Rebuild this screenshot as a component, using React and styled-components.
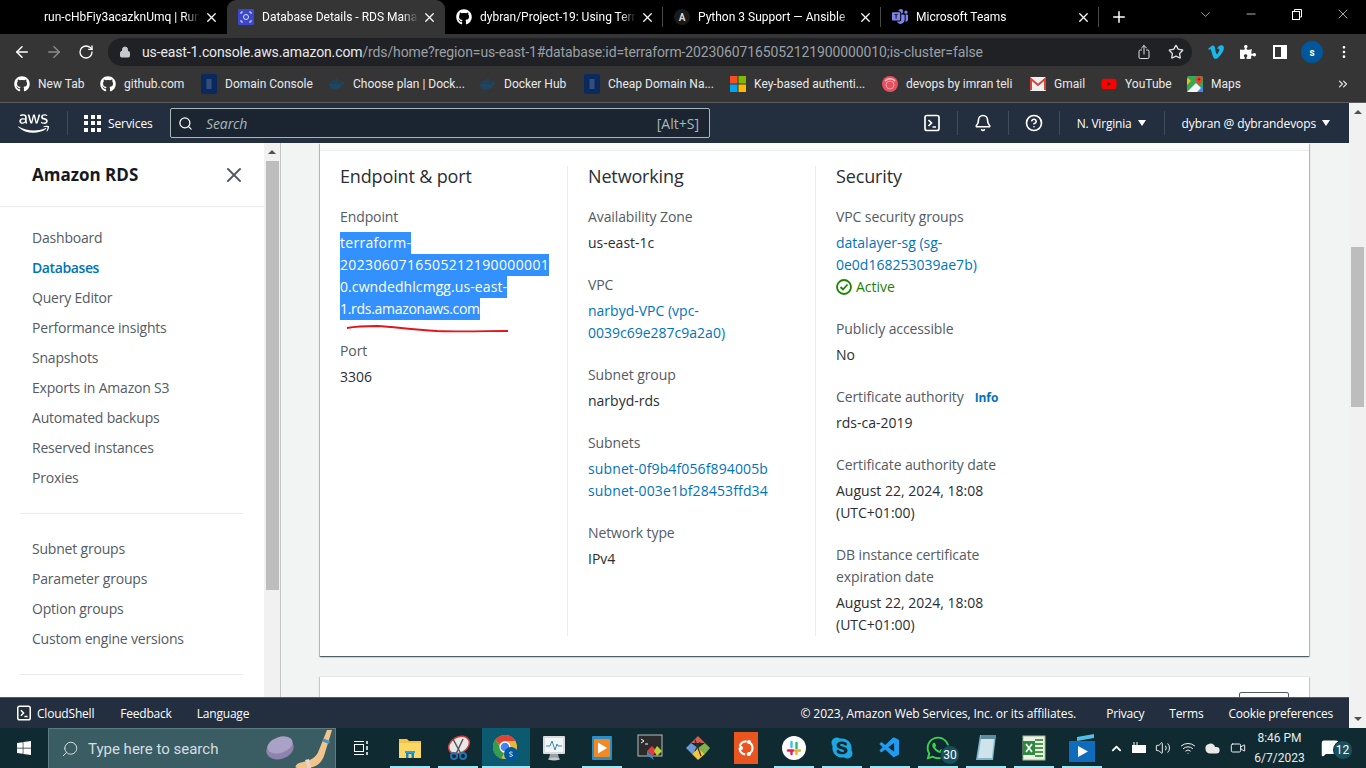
import React from 'react';
import styled, { createGlobalStyle } from 'styled-components';
import { FaGithub, FaDocker, FaVimeoV, FaPuzzlePiece, FaAws, FaSkype, FaWhatsapp, FaWindows, FaYoutube, FaChevronUp } from 'react-icons/fa';
import { BsMicrosoftTeams } from 'react-icons/bs';
import { VscVscode } from 'react-icons/vsc';
import { IoShareOutline } from 'react-icons/io5';
import {
  ArrowLeft, ArrowRight, RotateCw, Lock, Star, Plus, X, Minus, ChevronDown, Search, Bell, CircleHelp,
  MoreVertical, ChevronsRight, Volume2, Wifi, Cloud, Video, MessageSquare,
} from 'lucide-react';

const consoleFont = `"Open Sans", "Noto Sans", sans-serif`;
const chromeFont = `Roboto, "Noto Sans", sans-serif`;

const Global = createGlobalStyle`
  html, body { margin: 0; padding: 0; overflow: hidden; background: #fff; }
  * { box-sizing: border-box; }
`;

const Screen = styled.div`
  width: 1366px;
  height: 768px;
  display: flex;
  flex-direction: column;
  overflow: hidden;
  font-family: ${chromeFont};
`;

/* browser tabs */
const TabStrip = styled.div`
  height: 34px;
  background: #000;
  display: flex;
  padding-left: 9px;
  color: #fff;
  font-size: 12px;
`;
const Tab = styled.div`
  width: 218px;
  height: 34px;
  display: flex;
  align-items: center;
  gap: 8px;
  padding: 0 8px 0 11px;
  background: ${(p) => (p.$active ? '#353535' : 'transparent')};
  border-radius: 9px 9px 0 0;
  position: relative;
  &::after {
    content: '';
    display: ${(p) => (p.$sep ? 'block' : 'none')};
    position: absolute;
    right: 0;
    top: 7px;
    height: 20px;
    width: 1px;
    background: #4a4a4a;
  }
`;
const FavSlot = styled.span`
  width: 16px;
  height: 16px;
  flex: none;
  display: flex;
  align-items: center;
  justify-content: center;
`;
const TabTitle = styled.span`
  flex: 1;
  min-width: 0;
  white-space: nowrap;
  overflow: hidden;
  -webkit-mask-image: linear-gradient(90deg, #000 90%, transparent 100%);
  mask-image: linear-gradient(90deg, #000 90%, transparent 100%);
`;
const TabClose = styled(X)`
  flex: none;
  margin-left: -4px;
`;
const LetterFav = styled.span`
  width: 16px;
  height: 16px;
  border-radius: 50%;
  background: #1a1a1a;
  color: #d8d8d8;
  font-size: 10px;
  font-weight: 700;
  display: flex;
  align-items: center;
  justify-content: center;
`;
const NewTab = styled.div`
  width: 40px;
  display: flex;
  align-items: center;
  justify-content: center;
`;
const WindowBtns = styled.div`
  margin-left: auto;
  display: flex;
  align-items: flex-start;
  padding-top: 6px;
`;
const WinBtn = styled.span`
  width: 46px;
  height: 16px;
  display: flex;
  align-items: center;
  justify-content: center;
`;

/* address bar */
const Toolbar = styled.div`
  height: 36px;
  background: #353535;
  display: flex;
  align-items: flex-start;
  padding: 4px 0 0 6px;
  color: #fff;
`;
const NavBtn = styled.span`
  width: 32px;
  height: 28px;
  display: flex;
  align-items: center;
  justify-content: center;
  color: ${(p) => (p.$dim ? '#8a8a8a' : '#fff')};
`;
const AddressPill = styled.div`
  width: 1084px;
  height: 28px;
  margin: 0 8px 0 6px;
  border-radius: 14px;
  background: #202124;
  display: flex;
  align-items: center;
  padding: 0 0 0 11px;
  font-size: 14px;
`;
const Url = styled.span`
  margin-left: 11px;
  color: #9aa0a6;
  white-space: nowrap;
  flex: 1;
  letter-spacing: -0.12px;
  b { font-weight: 400; color: #e8eaed; }
`;
const PillIcon = styled.span`
  width: 32px;
  display: flex;
  justify-content: center;
  color: #dfe1e5;
`;
const Avatar = styled.span`
  width: 22px;
  height: 22px;
  border-radius: 50%;
  background: #00579c;
  color: #fff;
  font-size: 10px;
  font-weight: 700;
  display: flex;
  align-items: center;
  justify-content: center;
`;

/* bookmarks */
const Bookmarks = styled.div`
  height: 33px;
  background: #353535;
  border-bottom: 1px solid #5c5c5c;
  display: flex;
  align-items: center;
  padding: 0 0 4px 14px;
  gap: 16px;
  color: #e8eaed;
  font-size: 12px;
`;
const Mark = styled.div`
  display: flex;
  align-items: center;
  gap: 8px;
  white-space: nowrap;
`;
const MarkLabel = styled.span`
  width: ${(p) => p.$w}px;
`;
const MoreMarks = styled.span`
  margin-left: auto;
  margin-right: 16px;
  display: flex;
`;

/* page below browser chrome */
const Viewport = styled.div`
  flex: 1;
  min-height: 0;
  display: flex;
`;
const ConsoleCol = styled.div`
  flex: 1;
  min-width: 0;
  display: flex;
  flex-direction: column;
  font-family: ${consoleFont};
`;
const ScrollTrack = styled.div`
  width: ${(p) => p.$w}px;
  flex: none;
  background: #f1f1f1;
  display: flex;
  flex-direction: column;
  align-items: center;
`;
const ArrowUp = styled.span`
  flex: none;
  margin-top: ${(p) => p.$top}px;
  width: 0;
  height: 0;
  border-left: 4px solid transparent;
  border-right: 4px solid transparent;
  border-bottom: 4px solid #505050;
`;
const ArrowDown = styled.span`
  flex: none;
  margin-top: auto;
  margin-bottom: 7px;
  width: 0;
  height: 0;
  border-left: 4px solid transparent;
  border-right: 4px solid transparent;
  border-top: 4px solid #505050;
`;
const Thumb = styled.div`
  flex: none;
  width: 13px;
  margin-top: ${(p) => p.$top}px;
  height: ${(p) => p.$h}px;
  background: #bdbdbd;
`;

/* aws top nav */
const AwsHeader = styled.header`
  height: 40px;
  flex: none;
  background: #232f3e;
  color: #fff;
  display: flex;
  align-items: center;
  font-size: 12px;
  font-weight: 500;
  padding-left: 18px;
`;
const AwsLogo = styled(FaAws)`
  width: 31px;
  height: 31px;
  margin-right: 18px;
`;
const HeadSep = styled.span`
  width: 1px;
  height: 24px;
  background: #414d5c;
  flex: none;
`;
const ServicesBtn = styled.div`
  width: 69px;
  display: flex;
  align-items: center;
  gap: 7px;
  margin: 0 17px 0 16px;
  letter-spacing: -0.1px;
`;
const GridIcon = styled.div`
  width: 17px;
  height: 17px;
  flex: none;
  display: grid;
  grid-template-columns: repeat(3, 4px);
  grid-auto-rows: 4px;
  gap: 2.5px;
  i { background: #fff; display: block; }
`;
const SearchBox = styled.div`
  width: 540px;
  height: 30px;
  background: #1b2532;
  border: 1px solid #aab7b8;
  border-radius: 2px;
  display: flex;
  align-items: center;
  padding: 0 10px 0 7px;
  font-weight: 400;
  font-size: 14px;
  color: #aab7b8;
  em { margin-left: 13px; font-size: 14px; letter-spacing: -0.1px; }
  span { margin-left: auto; }
`;
const HeadRight = styled.div`
  margin-left: auto;
  display: flex;
  align-items: center;
  height: 24px;
  padding-right: 19px;
`;
const HeadIcon = styled.span`
  width: ${(p) => p.$w || 50}px;
  display: flex;
  justify-content: center;
`;
const HeadMenu = styled.span`
  display: flex;
  align-items: center;
  gap: 6px;
  padding: 0 ${(p) => p.$pad}px 0 17px;
  white-space: nowrap;
  letter-spacing: ${(p) => p.$ls}px;
`;
const Caret = styled.i`
  width: 0;
  height: 0;
  border-left: 4px solid transparent;
  border-right: 4px solid transparent;
  border-top: 6px solid #fff;
`;

/* body of console */
const Body = styled.div`
  flex: 1;
  min-height: 0;
  display: flex;
  overflow: hidden;
  background: #f2f3f3;
`;
const Sidebar = styled.aside`
  width: 264px;
  flex: none;
  background: #fff;
`;
const SideHead = styled.div`
  height: 64px;
  border-bottom: 1px solid #eaeded;
  padding: 0 18px 0 32px;
  display: flex;
  align-items: center;
  justify-content: space-between;
  color: #16191f;
  font-size: 17px;
  font-weight: 700;
  svg { color: #545b64; }
`;
const SideGroup = styled.nav`
  padding: 16px 0 20px;
  margin: 0 21px 0 20px;
  border-bottom: 1px solid #eaeded;
  & + & { padding-top: 20px; }
`;
const SideItem = styled.div`
  height: 30px;
  line-height: 30px;
  padding-left: 12px;
  font-size: 14px;
  color: ${(p) => (p.$on ? '#0073bb' : '#545b64')};
  font-weight: ${(p) => (p.$on ? 600 : 400)};
  letter-spacing: ${(p) => (p.$on ? -0.4 : -0.2)}px;
  white-space: nowrap;
`;
const Main = styled.main`
  flex: 1;
  min-width: 0;
  border-left: 1px solid #c4c4c4;
  padding: 0 40px 0 39px;
`;
const Card = styled.section`
  background: #fff;
  box-shadow: 0 1px 1px 0 rgba(0, 28, 36, 0.5), 1px 1px 1px 0 rgba(0, 28, 36, 0.2), -1px 1px 1px 0 rgba(0, 28, 36, 0.2);
`;
const CardStrip = styled.div`
  height: 8px;
  background: #fafafa;
  border-bottom: 1px solid #eaeded;
`;
const Columns = styled.div`
  display: grid;
  grid-template-columns: repeat(3, 248px);
  padding: 15px 0 20px 0;
`;
const Column = styled.div`
  padding: 0 20px;
  border-right: ${(p) => (p.$last ? 'none' : '1px solid #eaeded')};
  position: relative;
  height: 470px;
`;
const ColHead = styled.h3`
  margin: 0 0 20px;
  font-size: 18px;
  line-height: 20px;
  font-weight: 400;
  letter-spacing: -0.15px;
  color: #2a2e33;
`;
const Field = styled.div`
  margin-bottom: 20px;
  font-size: 14px;
  line-height: 22px;
`;
const Label = styled.div`
  color: #545b64;
  margin-bottom: 4px;
  letter-spacing: -0.1px;
`;
const InfoLink = styled.span`
  margin-left: 11px;
  color: #0073bb;
  font-size: 12px;
  line-height: 1;
  font-weight: 700;
  letter-spacing: -0.1px;
`;
const Value = styled.div`
  color: #2a2e33;
`;
const LinkValue = styled.div`
  color: #0073bb;
  letter-spacing: ${(p) => p.$ls || 0}px;
`;
const SelLine = styled.span`
  display: block;
  width: fit-content;
  height: 22px;
  background: #3390ff;
  color: #fff;
  white-space: nowrap;
  letter-spacing: ${(p) => p.$ls}px;
`;
const Status = styled.div`
  display: flex;
  align-items: center;
  gap: 4px;
  color: #1d8102;
`;
const RedMark = styled.svg`
  position: absolute;
  left: 26px;
  top: 158px;
  width: 164px;
  height: 10px;
`;
const NextCard = styled.section`
  margin-top: 21px;
  height: 40px;
  background: #fff;
  box-shadow: 0 1px 1px 0 rgba(0, 28, 36, 0.3), -1px 0 1px 0 rgba(0, 28, 36, 0.15), 1px 0 1px 0 rgba(0, 28, 36, 0.15);
  display: flex;
  justify-content: flex-end;
  padding: 15px 20px 0 0;
`;
const GhostBtn = styled.div`
  width: 50px;
  height: 24px;
  border: 1px solid #545b64;
  border-radius: 2px;
`;

/* aws footer */
const AwsFooter = styled.footer`
  height: 31px;
  flex: none;
  background: #232f3e;
  border-top: 1px solid #545b64;
  color: #fff;
  display: flex;
  align-items: center;
  font-size: 12px;
  font-weight: 500;
  letter-spacing: -0.2px;
  padding: 0 16px;
  white-space: nowrap;
`;
const FootLink = styled.span`
  margin-left: ${(p) => p.$ml}px;
`;
const FootCopy = styled.span`
  letter-spacing: -0.08px;
`;
const FootSpacer = styled.span`
  flex: 1;
`;

/* windows taskbar */
const Taskbar = styled.div`
  height: 40px;
  flex: none;
  background: #0f2a31;
  display: flex;
  align-items: center;
  color: #fff;
`;
const StartBtn = styled.div`
  width: 48px;
  display: flex;
  justify-content: center;
`;
const TaskSearch = styled.div`
  width: 288px;
  height: 40px;
  background: #3a5c63;
  border: 1px solid #5d7a80;
  border-bottom: none;
  display: flex;
  align-items: center;
  padding-left: 12px;
  font-size: 15px;
  font-family: ${chromeFont};
  color: #d5dfe1;
  span { margin-left: 9px; }
  svg:last-child { margin-left: auto; }
`;
const MirrorSearch = styled(Search)`
  transform: scaleX(-1);
`;
const TaskSlot = styled.div`
  width: ${(p) => p.$w || 48}px;
  height: 40px;
  flex: none;
  display: flex;
  align-items: center;
  justify-content: center;
  position: relative;
  background: ${(p) => (p.$active ? '#0b5a70' : 'transparent')};
  &::after {
    content: '';
    display: ${(p) => (p.$open ? 'block' : 'none')};
    position: absolute;
    left: ${(p) => (p.$active ? 0 : 4)}px;
    right: ${(p) => (p.$active ? 0 : 4)}px;
    bottom: 0;
    height: 2px;
    background: #9fe6f5;
  }
`;
const CountBadge = styled.span`
  position: absolute;
  right: ${(p) => p.$r}px;
  bottom: 3px;
  min-width: 20px;
  height: 20px;
  border-radius: 50%;
  background: #17505e;
  border: 1px solid #0f2a31;
  color: #fff;
  font-size: 12px;
  display: flex;
  align-items: center;
  justify-content: center;
  font-family: ${chromeFont};
`;
const Tray = styled.div`
  display: flex;
  align-items: center;
  gap: 8.5px;
  margin-left: 5px;
  color: #fff;
`;
const Clock = styled.div`
  width: 64px;
  margin-left: 2px;
  text-align: center;
  font-size: 12px;
  line-height: 20px;
  color: #e6ecec;
`;
const Notify = styled.div`
  position: relative;
  margin-left: 9px;
  width: 26px;
  height: 30px;
  display: flex;
  align-items: center;
`;

const nav1 = ['Dashboard', 'Databases', 'Query Editor', 'Performance insights', 'Snapshots', 'Exports in Amazon S3', 'Automated backups', 'Reserved instances', 'Proxies'];
const nav2 = ['Subnet groups', 'Parameter groups', 'Option groups', 'Custom engine versions'];

const RdsFavicon = () => (
  <svg width="16" height="16" viewBox="0 0 16 16">
    <rect width="16" height="16" rx="1" fill="#3b48cc" />
    <circle cx="8" cy="8" r="2.5" fill="none" stroke="#dfe3ff" strokeWidth="1" />
    <path d="M3 5V3h2M11 3h2v2M13 11v2h-2M5 13H3v-2" fill="none" stroke="#dfe3ff" strokeWidth="1" />
  </svg>
);
const DomainIcon = () => (
  <svg width="16" height="20" viewBox="0 0 16 20">
    <rect width="16" height="20" rx="2" fill="#0a2a5e" />
    <rect x="5.5" y="5" width="5" height="10" fill="#33507c" />
  </svg>
);
const MsLogo = () => (
  <svg width="16" height="16" viewBox="0 0 16 16">
    <rect width="7.5" height="7.5" fill="#f25022" />
    <rect x="8.5" width="7.5" height="7.5" fill="#7fba00" />
    <rect y="8.5" width="7.5" height="7.5" fill="#00a4ef" />
    <rect x="8.5" y="8.5" width="7.5" height="7.5" fill="#ffb900" />
  </svg>
);
const RedBall = () => (
  <svg width="16" height="16" viewBox="0 0 16 16">
    <circle cx="8" cy="8" r="8" fill="#e8505f" />
    <path d="M3 5c3-3 8-3 10 0" fill="none" stroke="#ffc2c8" strokeWidth="1.5" />
    <circle cx="8" cy="9" r="4" fill="none" stroke="#fff" strokeOpacity="0.45" />
  </svg>
);
const GmailIcon = () => (
  <svg width="16" height="14" viewBox="0 0 16 14">
    <rect width="16" height="14" rx="1" fill="#f1f1f1" />
    <path d="M1 13V2l7 6 7-6v11" fill="none" stroke="#d6453b" strokeWidth="2" />
  </svg>
);
const MapsIcon = () => (
  <svg width="16" height="16" viewBox="0 0 16 16">
    <rect width="16" height="16" rx="1.5" fill="#34a853" />
    <path d="M0 16 9 7l7 7v2z" fill="#f5f5f5" />
    <path d="M0 3v6l4-4-3-3z" fill="#fbbc04" />
    <path d="M10 16 16 10v6z" fill="#4285f4" />
    <path d="M12 0c-2 0-3.500 1.500-3.500 3.300C8.500 6 12 9 12 9s3.500-3 3.500-5.700C15.500 1.500 14 0 12 0z" fill="#ea4335" />
    <circle cx="12" cy="3.300" r="1.200" fill="#8f1d15" />
  </svg>
);
const SidePanelIcon = () => (
  <svg width="16" height="16" viewBox="0 0 16 16">
    <path fillRule="evenodd" d="M1 1h14v14H1zM3 3v10h6V3z" fill="#fff" />
  </svg>
);
const RestoreIcon = () => (
  <svg width="12" height="12" viewBox="0 0 12 12" fill="none" stroke="#fff">
    <rect x="1.5" y="3.5" width="7" height="8" />
    <path d="M3.5 3V1.5h7V9H9" />
  </svg>
);
const ShellIcon = ({ size = 18 }) => (
  <svg width={size} height={size} viewBox="0 0 18 18" fill="none" stroke="#fff" strokeWidth="1.7">
    <rect x="2" y="1.5" width="14" height="15" rx="2" />
    <path d="M5.5 6 8.5 9l-3 3M9.5 13h3.500" />
  </svg>
);
const Hockey = () => (
  <svg width="70" height="38" viewBox="0 0 70 38">
    <path d="M62 0 54 20c-2 6-6 9-12 11l-8 2c-3 1-5 5-2 5h8c10 0 16-4 19-12l8-26z" fill="#f2c48d" />
    <path d="M58.500 8.500 65 11l-1 3-6.500-2.500z" fill="#4a90c8" />
    <path d="M40 30l3 8h3l-2-9z" fill="#e5d7d0" />
    <ellipse cx="15" cy="19" rx="14" ry="10" transform="rotate(-18 15 19)" fill="#8d83ad" />
    <ellipse cx="15" cy="15" rx="13" ry="8" transform="rotate(-18 15 15)" fill="#a9a1c6" />
  </svg>
);
const Explorer = () => (
  <svg width="24" height="24" viewBox="0 0 24 24">
    <path d="M1 3h8l2 2h12v17H1z" fill="#f5c243" />
    <path d="M1 7h22v15H1z" fill="#fbd866" />
    <path d="M8 22v-7h8v7h-2.500v-4h-3v4z" fill="#1c7fc4" />
    <path d="M7 15h10v2H7z" fill="#29a0df" />
  </svg>
);
const Snip = () => (
  <svg width="26" height="26" viewBox="0 0 26 26">
    <ellipse cx="14" cy="10" rx="11" ry="8" transform="rotate(-30 14 10)" fill="#e8e8e8" stroke="#c8413f" strokeWidth="1.5" />
    <path d="M8 4l8 15M18 4 11 19" stroke="#555" strokeWidth="1.5" />
    <circle cx="9" cy="21" r="3" fill="none" stroke="#2472b4" strokeWidth="2" />
    <circle cx="18" cy="21" r="3" fill="none" stroke="#2472b4" strokeWidth="2" />
  </svg>
);
const ChromeIcon = () => (
  <svg width="26" height="26" viewBox="0 0 26 26">
    <circle cx="12" cy="12" r="12" fill="#e8b73a" />
    <path d="M12 0a12 12 0 0 1 10.400 6H12a6 6 0 0 0-5.700 4L2.500 4.500A12 12 0 0 1 12 0z" fill="#db4437" />
    <path d="M2.500 4.500 7 12a5 5 0 0 0 4 6l-2.500 5.500A12 12 0 0 1 2.500 4.500z" fill="#2f9e4f" />
    <circle cx="12" cy="12" r="5.500" fill="#fff" />
    <circle cx="12" cy="12" r="4.300" fill="#4285f4" />
    <circle cx="18" cy="19" r="7" fill="#00579c" />
    <path d="M16.500 21c2 .8 3.300 0 3-1-.3-1-3-.7-3-2 0-1 1.500-1.300 3-.7" fill="none" stroke="#fff" strokeWidth=".9" />
  </svg>
);
const ResMon = () => (
  <svg width="24" height="26" viewBox="0 0 24 26">
    <rect x="1" y="1" width="22" height="18" rx="1" fill="#d8dcde" />
    <rect x="3" y="3" width="18" height="14" fill="#f3f6f7" />
    <path d="M4 11h4l2-5 3 9 2-6 1 2h4" fill="none" stroke="#3d86b8" strokeWidth="1" />
    <path d="M8 19h8l1 4H7z" fill="#9aa0a3" />
    <ellipse cx="12" cy="24" rx="6" ry="1.500" fill="#c6c9cb" />
  </svg>
);
const Media = () => (
  <svg width="20" height="26" viewBox="0 0 20 26">
    <rect y="1" width="20" height="24" rx="1" fill="#2c8ec4" />
    <rect x="2" y="4" width="16" height="18" rx="1" fill="#f08a24" />
    <path d="M6 7.500 15 13l-9 5.500z" fill="#fff" />
  </svg>
);
const Cmder = () => (
  <svg width="26" height="28" viewBox="0 0 26 28">
    <rect x="1" y="1" width="24" height="21" fill="#2b2b2b" stroke="#bbb" />
    <path d="M4 5l3 2-3 2M8 10h3" fill="none" stroke="#fff" />
    <path d="M15 12l5 5-5 5-5-5z" fill="#e23b3b" />
    <path d="M20 12l5 5-5 5-3-5z" fill="#b7d332" />
    <path d="M10 17l5 5 2 4-7-5z" fill="#3a8ed0" />
  </svg>
);
const GitDiamond = () => (
  <svg width="26" height="26" viewBox="0 0 26 26">
    <path d="M13 1 20 8H6z" fill="#d85f4e" />
    <path d="M20 8l5 5-5 6-7-6z" fill="#7fb24a" />
    <path d="M13 13l7 6-7 6-6-6z" fill="#f0c542" />
    <path d="M6 8l7 5-6 6-6-6z" fill="#6a9bd6" />
    <path d="M10 5l6 16M15 7l-5 9" stroke="#333" strokeWidth="1.2" />
  </svg>
);
const UbuntuTile = () => (
  <svg width="24" height="32" viewBox="0 0 24 32">
    <rect width="24" height="32" fill="#e9541f" />
    <circle cx="12" cy="16" r="6.500" fill="none" stroke="#fff" strokeWidth="2.200" strokeDasharray="9 1.800" />
    <circle cx="7" cy="16" r="2" fill="#fff" />
    <circle cx="15" cy="10" r="2" fill="#fff" />
    <circle cx="15" cy="22" r="2" fill="#fff" />
  </svg>
);
const SlackTile = () => (
  <svg width="24" height="24" viewBox="0 0 24 24">
    <circle cx="12" cy="12" r="12" fill="#fff" />
    <path d="M9.500 6v5" stroke="#36c5f0" strokeWidth="2.400" strokeLinecap="round" />
    <path d="M14.500 7v5" stroke="#2eb67d" strokeWidth="2.400" strokeLinecap="round" />
    <path d="M6 14.500h5" stroke="#e01e5a" strokeWidth="2.400" strokeLinecap="round" />
    <path d="M13 14.500h5M14.500 18v-2" stroke="#ecb22e" strokeWidth="2.400" strokeLinecap="round" />
    <path d="M9.500 15v3" stroke="#e01e5a" strokeWidth="2.400" strokeLinecap="round" />
  </svg>
);
const Notepad = () => (
  <svg width="24" height="28" viewBox="0 0 24 28">
    <path d="M6 1h16l-3 25H2z" fill="#7fb6c9" />
    <path d="M7 5h13l-2 19H4z" fill="#cfe3ea" />
    <path d="M7 1h15l-.5 4H6.500z" fill="#5d8c9d" />
  </svg>
);
const ExcelTile = () => (
  <svg width="26" height="26" viewBox="0 0 26 26">
    <rect x="2" y="1" width="22" height="24" fill="#e9f2e4" stroke="#9db98f" />
    <path d="M14 5h8M14 9h8M14 13h8M14 17h8M14 21h8" stroke="#4d9a4d" strokeWidth="2" />
    <rect x="2" y="6" width="12" height="14" fill="#2f8a3f" />
    <path d="M5 9l6 8M11 9l-6 8" stroke="#fff" strokeWidth="1.600" />
  </svg>
);
const Stream = () => (
  <svg width="26" height="28" viewBox="0 0 26 28">
    <path d="M8 3 25 0v4L8 7z" fill="#4fc0ea" />
    <rect y="7" width="26" height="21" fill="#0f6cbd" />
    <path d="M9 12l10 5.500L9 23z" fill="#fff" />
  </svg>
);
const PlugIcon = () => (
  <svg width="16" height="14" viewBox="0 0 16 14" fill="none" stroke="#fff">
    <rect x="1.500" y="4.500" width="13" height="7" fill="#fff" />
    <path d="M3 1v3M6 1v3" />
  </svg>
);

export default function App() {
  return (
    <Screen>
      <Global />
      <TabStrip>
        <Tab>
          <FavSlot />
          <TabTitle>run-cHbFiy3acazknUmq | Run</TabTitle>
          <TabClose size={15} />
        </Tab>
        <Tab $active>
          <FavSlot><RdsFavicon /></FavSlot>
          <TabTitle>Database Details - RDS Mana</TabTitle>
          <TabClose size={15} />
        </Tab>
        <Tab $sep>
          <FavSlot><FaGithub size={16} /></FavSlot>
          <TabTitle>dybran/Project-19: Using Terr</TabTitle>
          <TabClose size={15} />
        </Tab>
        <Tab $sep>
          <FavSlot><LetterFav>A</LetterFav></FavSlot>
          <TabTitle>Python 3 Support — Ansible</TabTitle>
          <TabClose size={15} />
        </Tab>
        <Tab $sep>
          <FavSlot><BsMicrosoftTeams size={16} color="#7b83eb" /></FavSlot>
          <TabTitle>Microsoft Teams</TabTitle>
          <TabClose size={15} />
        </Tab>
        <NewTab><Plus size={18} /></NewTab>
        <WindowBtns>
          <WinBtn><ChevronDown size={15} strokeWidth={1} /></WinBtn>
          <WinBtn><Minus size={14} strokeWidth={1.2} /></WinBtn>
          <WinBtn><RestoreIcon /></WinBtn>
          <WinBtn><X size={16} strokeWidth={1} /></WinBtn>
        </WindowBtns>
      </TabStrip>

      <Toolbar>
        <NavBtn><ArrowLeft size={18} /></NavBtn>
        <NavBtn $dim><ArrowRight size={18} /></NavBtn>
        <NavBtn><RotateCw size={16} /></NavBtn>
        <AddressPill>
          <Lock size={12} color="#c5c8cc" fill="#c5c8cc" />
          <Url><b>us-east-1.console.aws.amazon.com</b>/rds/home?region=us-east-1#database:id=terraform-20230607165052121900000010;is-cluster=false</Url>
          <PillIcon><IoShareOutline size={16} /></PillIcon>
          <PillIcon><Star size={16} /></PillIcon>
        </AddressPill>
        <NavBtn><FaVimeoV size={18} color="#1ab7ea" /></NavBtn>
        <NavBtn><FaPuzzlePiece size={16} /></NavBtn>
        <NavBtn><SidePanelIcon /></NavBtn>
        <NavBtn><Avatar>s</Avatar></NavBtn>
        <NavBtn><MoreVertical size={16} /></NavBtn>
      </Toolbar>

      <Bookmarks>
        <Mark><FaGithub size={16} color="#fff" /><MarkLabel $w={46}>New Tab</MarkLabel></Mark>
        <Mark><FaGithub size={16} color="#fff" /><MarkLabel $w={61}>github.com</MarkLabel></Mark>
        <Mark><DomainIcon /><MarkLabel $w={88}>Domain Console</MarkLabel></Mark>
        <Mark><FaDocker size={16} color="#1f4560" /><MarkLabel $w={111}>Choose plan | Dock...</MarkLabel></Mark>
        <Mark><FaDocker size={16} color="#1f4560" /><MarkLabel $w={64}>Docker Hub</MarkLabel></Mark>
        <Mark><DomainIcon /><MarkLabel $w={106}>Cheap Domain Na...</MarkLabel></Mark>
        <Mark><MsLogo /><MarkLabel $w={112}>Key-based authenti...</MarkLabel></Mark>
        <Mark><RedBall /><MarkLabel $w={108}>devops by imran teli</MarkLabel></Mark>
        <Mark><GmailIcon /><MarkLabel $w={31}>Gmail</MarkLabel></Mark>
        <Mark><FaYoutube size={16} color="#f00" /><MarkLabel $w={46}>YouTube</MarkLabel></Mark>
        <Mark><MapsIcon /><MarkLabel $w={29}>Maps</MarkLabel></Mark>
        <MoreMarks><ChevronsRight size={14} /></MoreMarks>
      </Bookmarks>

      <Viewport>
        <ConsoleCol>
          <AwsHeader>
            <AwsLogo />
            <HeadSep />
            <ServicesBtn>
              <GridIcon>{Array.from({ length: 9 }, (_, i) => <i key={i} />)}</GridIcon>
              Services
            </ServicesBtn>
            <SearchBox>
              <Search size={15} color="#fff" />
              <em>Search</em>
              <span>[Alt+S]</span>
            </SearchBox>
            <HeadRight>
              <HeadIcon><ShellIcon /></HeadIcon>
              <HeadSep />
              <HeadIcon><Bell size={18} strokeWidth={2.2} /></HeadIcon>
              <HeadSep />
              <HeadIcon><CircleHelp size={18} strokeWidth={2.2} /></HeadIcon>
              <HeadSep />
              <HeadMenu $pad={18} $ls={-0.2}>N. Virginia <Caret /></HeadMenu>
              <HeadSep />
              <HeadMenu $pad={0} $ls={-0.1}>dybran @ dybrandevops <Caret /></HeadMenu>
            </HeadRight>
          </AwsHeader>

          <Body>
            <Sidebar>
              <SideHead>
                Amazon RDS
                <X size={24} strokeWidth={2} />
              </SideHead>
              <SideGroup>
                {nav1.map((n) => <SideItem key={n} $on={n === 'Databases'}>{n}</SideItem>)}
              </SideGroup>
              <SideGroup>
                {nav2.map((n) => <SideItem key={n}>{n}</SideItem>)}
              </SideGroup>
            </Sidebar>
            <ScrollTrack $w={16}>
              <ArrowUp $top={7} />
              <Thumb $top={7} $h={429} />
            </ScrollTrack>
            <Main>
              <Card>
                <CardStrip />
                <Columns>
                  <Column>
                    <ColHead>Endpoint &amp; port</ColHead>
                    <Field>
                      <Label>Endpoint</Label>
                      <SelLine $ls={0.3}>terraform-</SelLine>
                      <SelLine $ls={0.36}>2023060716505212190000001</SelLine>
                      <SelLine $ls={0.09}>0.cwndedhlcmgg.us-east-</SelLine>
                      <SelLine $ls={-0.3}>1.rds.amazonaws.com</SelLine>
                    </Field>
                    <RedMark viewBox="0 0 164 10">
                      <path d="M1 4C12 2 22 2 31 2c18 1 30 3 60 5 25 1 50 0 71 0" fill="none" stroke="#e3141d" strokeWidth="1.800" />
                    </RedMark>
                    <Field>
                      <Label>Port</Label>
                      <Value>3306</Value>
                    </Field>
                  </Column>
                  <Column>
                    <ColHead>Networking</ColHead>
                    <Field>
                      <Label>Availability Zone</Label>
                      <Value>us-east-1c</Value>
                    </Field>
                    <Field>
                      <Label>VPC</Label>
                      <LinkValue>narbyd-VPC (vpc-<br />0039c69e287c9a2a0)</LinkValue>
                    </Field>
                    <Field>
                      <Label>Subnet group</Label>
                      <Value>narbyd-rds</Value>
                    </Field>
                    <Field>
                      <Label>Subnets</Label>
                      <LinkValue $ls={0.12}>subnet-0f9b4f056f894005b</LinkValue>
                      <LinkValue $ls={0.12}>subnet-003e1bf28453ffd34</LinkValue>
                    </Field>
                    <Field>
                      <Label>Network type</Label>
                      <Value>IPv4</Value>
                    </Field>
                  </Column>
                  <Column $last>
                    <ColHead>Security</ColHead>
                    <Field>
                      <Label>VPC security groups</Label>
                      <LinkValue>datalayer-sg (sg-<br />0e0d168253039ae7b)</LinkValue>
                      <Status>
                        <svg width="16" height="16" viewBox="0 0 16 16" fill="none" stroke="#1d8102" strokeWidth="1.800">
                          <circle cx="8" cy="8" r="7" />
                          <path d="M4.500 8 7 10.500l4.500-5" />
                        </svg>
                        Active
                      </Status>
                    </Field>
                    <Field>
                      <Label>Publicly accessible</Label>
                      <Value>No</Value>
                    </Field>
                    <Field>
                      <Label>Certificate authority<InfoLink>Info</InfoLink></Label>
                      <Value>rds-ca-2019</Value>
                    </Field>
                    <Field>
                      <Label>Certificate authority date</Label>
                      <Value>August 22, 2024, 18:08<br />(UTC+01:00)</Value>
                    </Field>
                    <Field>
                      <Label>DB instance certificate<br />expiration date</Label>
                      <Value>August 22, 2024, 18:08<br />(UTC+01:00)</Value>
                    </Field>
                  </Column>
                </Columns>
              </Card>
              <NextCard><GhostBtn /></NextCard>
            </Main>
          </Body>

          <AwsFooter>
            <ShellIcon size={16} />
            <FootLink $ml={5}>CloudShell</FootLink>
            <FootLink $ml={26}>Feedback</FootLink>
            <FootLink $ml={25}>Language</FootLink>
            <FootSpacer />
            <FootCopy>© 2023, Amazon Web Services, Inc. or its affiliates.</FootCopy>
            <FootLink $ml={30}>Privacy</FootLink>
            <FootLink $ml={25}>Terms</FootLink>
            <FootLink $ml={25}>Cookie preferences</FootLink>
          </AwsFooter>
        </ConsoleCol>
        <ScrollTrack $w={17}>
          <ArrowUp $top={7} />
          <Thumb $top={133} $h={160} />
          <ArrowDown />
        </ScrollTrack>
      </Viewport>

      <Taskbar>
        <StartBtn><FaWindows size={16} /></StartBtn>
        <TaskSearch>
          <MirrorSearch size={18} strokeWidth={1.3} />
          <span>Type here to search</span>
          <Hockey />
        </TaskSearch>
        <TaskSlot $w={50}>
          <svg width="16" height="16" viewBox="0 0 16 16" fill="none" stroke="#fff">
            <path d="M1 1.500h10M1 14.500h10" />
            <rect x="1.500" y="4.500" width="9" height="7" />
            <path d="M14 1v3M14 6v4M14 12v3" strokeWidth="1.500" />
          </svg>
        </TaskSlot>
        <TaskSlot $open><Explorer /></TaskSlot>
        <TaskSlot $open><Snip /></TaskSlot>
        <TaskSlot $open $active><ChromeIcon /></TaskSlot>
        <TaskSlot><ResMon /></TaskSlot>
        <TaskSlot $open><Media /></TaskSlot>
        <TaskSlot><Cmder /></TaskSlot>
        <TaskSlot><GitDiamond /></TaskSlot>
        <TaskSlot><UbuntuTile /></TaskSlot>
        <TaskSlot $open><SlackTile /></TaskSlot>
        <TaskSlot $open><FaSkype size={24} color="#1ea6e0" /></TaskSlot>
        <TaskSlot $open><VscVscode size={24} color="#1f9cf0" /></TaskSlot>
        <TaskSlot $open>
          <FaWhatsapp size={26} color="#3fd04f" />
          <CountBadge $r={2}>30</CountBadge>
        </TaskSlot>
        <TaskSlot $open><Notepad /></TaskSlot>
        <TaskSlot $open><ExcelTile /></TaskSlot>
        <TaskSlot $open><Stream /></TaskSlot>
        <Tray>
          <FaChevronUp size={11} />
          <PlugIcon />
          <Volume2 size={16} strokeWidth={1.4} />
          <Wifi size={16} strokeWidth={1.4} />
          <Cloud size={17} fill="#e8e8e8" strokeWidth={0} />
          <Video size={16} strokeWidth={1.4} />
        </Tray>
        <Clock>8:46 PM<br />6/7/2023</Clock>
        <Notify>
          <MessageSquare size={18} fill="#fff" />
          <CountBadge $r={-6}>12</CountBadge>
        </Notify>
      </Taskbar>
    </Screen>
  );
}
